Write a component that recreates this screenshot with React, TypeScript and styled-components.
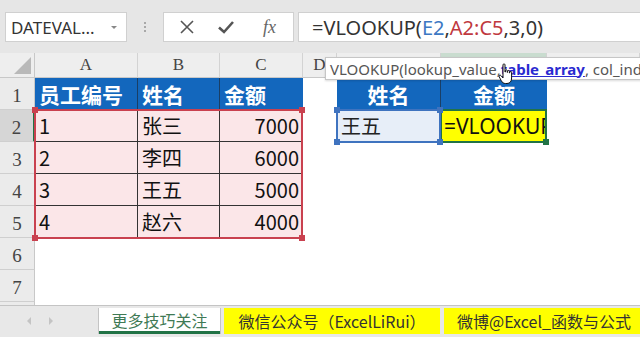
import React from "react";
import styled, { createGlobalStyle, css } from "styled-components";

const GlobalStyle = createGlobalStyle`
  html, body { margin: 0; padding: 0; background: #e6e6e6; }
  body { width: 640px; height: 337px; overflow: hidden; }
  * { box-sizing: border-box; }
`;

const UI = `"Noto Sans", "Noto Sans CJK SC", sans-serif`;
const CJK = `"Noto Sans CJK SC", "Noto Sans", sans-serif`;
const SERIF = `"Liberation Serif", serif`;

const Window = styled.div`
  width: 640px;
  height: 337px;
  display: flex;
  flex-direction: column;
  background: #e6e6e6;
  overflow: hidden;
`;

const FormulaBar = styled.div`
  height: 53px;
  flex: none;
  display: flex;
  align-items: flex-start;
  padding: 12px 0 0 5px;
  background: #e6e6e6;
`;

const Box = styled.div`
  height: 30px;
  background: #fff;
  border: 1px solid #d0d0d0;
  display: flex;
  align-items: center;
`;

const NameBox = styled(Box)`
  width: 122px;
  padding: 0 0 0 5px;
  font-family: ${UI};
  font-size: 17px;
  color: #333;
  justify-content: space-between;
`;

const Caret = styled.span`
  width: 0;
  height: 0;
  margin-right: 9px;
  border-left: 3px solid transparent;
  border-right: 3px solid transparent;
  border-top: 3px solid #888;
`;

const Grip = styled.div`
  width: 36px;
  height: 30px;
  display: flex;
  flex-direction: column;
  align-items: center;
  justify-content: center;
  gap: 2px;
  span { width: 2px; height: 2px; background: #a8a8a8; }
`;

const ButtonGroup = styled(Box)`
  width: 131px;
  justify-content: space-around;
  padding: 0 6px 0 4px;
  color: #555;
`;

const Fx = styled.span`
  font-family: ${SERIF};
  font-style: italic;
  font-size: 18px;
  color: #666;
  margin-left: 6px;
`;

const FormulaInput = styled(Box)`
  flex: 1;
  margin-left: 4px;
  border-right: none;
  padding-left: 13px;
  font-family: ${UI};
  font-size: 20px;
  color: #333;
  white-space: nowrap;
`;

const Ref = styled.span<{ $c: string }>`
  color: ${(p) => p.$c};
`;

const SheetArea = styled.div`
  flex: 1;
  position: relative;
  overflow: hidden;
  background: #fff;
`;

const Grid = styled.div`
  display: grid;
  grid-template-columns: 35px 103px 82px 83px 34px 104px 106px 1fr;
  grid-template-rows: 25px repeat(8, 32px);
`;

type Pos = { $r: number; $c: number };
const place = css<Pos>`
  grid-row: ${(p) => p.$r};
  grid-column: ${(p) => p.$c};
`;

const ColHead = styled.div<Pos & { $active?: boolean }>`
  ${place}
  background: ${(p) => (p.$active ? "#c9dccf" : "#eeeeee")};
  border-right: 1px solid #d3d3d3;
  border-bottom: 1px solid #c8c8c8;
  display: flex;
  align-items: flex-end;
  justify-content: center;
  padding-bottom: 2px;
  font-family: ${SERIF};
  font-size: 17px;
  color: #444;
`;

const Corner = styled.div`
  grid-row: 1;
  grid-column: 1;
  background: #eeeeee;
  border-right: 1px solid #c8c8c8;
  border-bottom: 1px solid #c8c8c8;
  position: relative;
  &::after {
    content: "";
    position: absolute;
    right: 3px;
    bottom: 3px;
    width: 0;
    height: 0;
    border-left: 17px solid transparent;
    border-bottom: 17px solid #b9b9b9;
  }
`;

const RowHead = styled.div<Pos & { $active?: boolean }>`
  ${place}
  background: ${(p) => (p.$active ? "#d6d6d6" : "#ebebeb")};
  border-bottom: 1px solid #cfcfcf;
  border-right: ${(p) => (p.$active ? "2px solid #217346" : "1px solid #c8c8c8")};
  display: flex;
  align-items: flex-end;
  justify-content: center;
  padding-bottom: 2px;
  font-family: ${SERIF};
  font-size: 19px;
  color: #444;
`;

type Kind = "blank" | "head" | "data" | "lookup" | "edit";

const kindStyles: Record<Kind, ReturnType<typeof css>> = {
  blank: css`background: #fff;`,
  head: css`
    background: #1367bd;
    color: #fff;
    font-weight: 700;
    font-size: 21px;
  `,
  data: css`background: #fbe6e8; color: #111;`,
  lookup: css`background: #e7eef8; color: #222;`,
  edit: css`
    background: #ffff00;
    color: #111;
    overflow: hidden;
    font-family: ${UI};
    font-size: 21px;
    padding-left: 3px;
  `,
};

const Cell = styled.div<Pos & { $kind: Kind; $align?: "left" | "right" | "center"; $br?: string; $bb?: string }>`
  ${place}
  display: flex;
  align-items: center;
  justify-content: ${(p) => (p.$align === "right" ? "flex-end" : p.$align === "center" ? "center" : "flex-start")};
  padding: 0 4px;
  font-family: ${CJK};
  font-size: 20px;
  line-height: 1;
  white-space: nowrap;
  border-right: ${(p) => (p.$br ? `1px solid ${p.$br}` : "none")};
  border-bottom: ${(p) => (p.$bb ? `1px solid ${p.$bb}` : "none")};
  ${(p) => kindStyles[p.$kind]}
`;

const Range = styled.div<{ $col: string; $row: string; $color: string }>`
  grid-column: ${(p) => p.$col};
  grid-row: ${(p) => p.$row};
  margin: -1px 0 -1px -1px;
  border: 2px solid ${(p) => p.$color};
  position: relative;
  pointer-events: none;
  z-index: 2;
`;

const Handle = styled.span<{ $pos: "tl" | "tr" | "bl" | "br"; $color: string }>`
  position: absolute;
  width: 6px;
  height: 6px;
  background: ${(p) => p.$color};
  ${(p) => (p.$pos[0] === "t" ? "top: -4px;" : "bottom: -4px;")}
  ${(p) => (p.$pos[1] === "l" ? "left: -4px;" : "right: -4px;")}
`;

const Tooltip = styled.div`
  position: absolute;
  left: 325px;
  top: 4px;
  width: 330px;
  height: 23px;
  background: #fff;
  border: 1px solid #c6c6c6;
  box-shadow: 0 1px 2px rgba(0, 0, 0, 0.15);
  display: flex;
  align-items: center;
  padding-left: 4px;
  font-family: ${UI};
  font-size: 15px;
  color: #555;
  white-space: nowrap;
  overflow: hidden;
  z-index: 5;
`;

const Arg = styled.span`
  color: #2a2ad0;
  font-weight: 700;
  text-decoration: underline;
`;

const Pointer = styled.svg`
  position: absolute;
  left: 498px;
  top: 10px;
  z-index: 6;
`;

const TabBar = styled.div`
  height: 32px;
  flex: none;
  background: #e8e8e8;
  border-top: 1px solid #c4c4c4;
  display: flex;
  align-items: flex-start;
  padding-top: 2px;
  overflow: hidden;
`;

const Nav = styled.div`
  width: 99px;
  flex: none;
  height: 26px;
  display: flex;
  align-items: center;
  gap: 18px;
  padding-left: 27px;
`;

const Arrow = styled.span<{ $dir: "l" | "r" }>`
  width: 0;
  height: 0;
  border-top: 4px solid transparent;
  border-bottom: 4px solid transparent;
  ${(p) => (p.$dir === "l" ? "border-right: 4px solid #c4c4c4;" : "border-left: 4px solid #c4c4c4;")}
`;

const Tab = styled.div<{ $active?: boolean; $w: number }>`
  width: ${(p) => p.$w}px;
  flex: none;
  height: 26px;
  display: flex;
  align-items: center;
  justify-content: center;
  font-family: ${CJK};
  font-size: 16px;
  line-height: 1;
  white-space: nowrap;
  margin-right: 4px;
  ${(p) =>
    p.$active
      ? css`
          background: #fff;
          color: #3f7a55;
          border-bottom: 3px solid #217346;
          box-shadow: 1px 0 0 #c4c4c4, -1px 0 0 #c4c4c4;
        `
      : css`
          background: #ffff00;
          color: #333;
        `}
`;

const cols = ["A", "B", "C", "D", "E", "F", "G"];

type CellDef = { t?: string; k: Kind; a?: "left" | "right" | "center"; br?: string; bb?: string };

const DARK = "#333";
const HEADLINE = "#1a3f66";

const rows: CellDef[][] = [
  [
    { t: "员工编号", k: "head", br: HEADLINE },
    { t: "姓名", k: "head", br: HEADLINE },
    { t: "金额", k: "head" },
    { k: "blank" },
    { t: "姓名", k: "head", a: "center", br: HEADLINE },
    { t: "金额", k: "head", a: "center" },
    { k: "blank" },
  ],
  ...[
    ["1", "张三", "7000"],
    ["2", "李四", "6000"],
    ["3", "王五", "5000"],
    ["4", "赵六", "4000"],
  ].map((r, i): CellDef[] => {
    const bb = i < 3 ? DARK : undefined;
    const base: CellDef[] = [
      { t: r[0], k: "data", br: DARK, bb },
      { t: r[1], k: "data", br: DARK, bb },
      { t: r[2], k: "data", a: "right", bb },
      { k: "blank" },
    ];
    if (i === 0) {
      base.push({ t: "王五", k: "lookup" }, { t: "=VLOOKUP", k: "edit" }, { k: "blank" });
    } else {
      base.push({ k: "blank" }, { k: "blank" }, { k: "blank" });
    }
    return base;
  }),
  ...[0, 1, 2].map((): CellDef[] => cols.map(() => ({ k: "blank" as Kind }))),
];

const XIcon = () => (
  <svg width="16" height="16" viewBox="0 0 16 16">
    <path d="M2 2 L14 14 M14 2 L2 14" stroke="#555" strokeWidth="1.6" fill="none" />
  </svg>
);

const CheckIcon = () => (
  <svg width="18" height="16" viewBox="0 0 18 16">
    <path d="M2 8.5 L7 13 L16 3" stroke="#555" strokeWidth="2.6" fill="none" />
  </svg>
);

export default function App() {
  return (
    <>
      <GlobalStyle />
      <Window>
        <FormulaBar>
          <NameBox>
            DATEVAL...
            <Caret />
          </NameBox>
          <Grip>
            <span />
            <span />
            <span />
          </Grip>
          <ButtonGroup>
            <XIcon />
            <CheckIcon />
            <Fx>fx</Fx>
          </ButtonGroup>
          <FormulaInput>
            =VLOOKUP(<Ref $c="#3c78c3">E2</Ref>,<Ref $c="#c0393f">A2:C5</Ref>,3,0)
          </FormulaInput>
        </FormulaBar>
        <SheetArea>
          <Grid>
            <Corner />
            {cols.map((c, ci) => (
              <ColHead key={c} $r={1} $c={ci + 2} $active={c === "F"}>
                {c}
              </ColHead>
            ))}
            {rows.map((r, ri) => (
              <React.Fragment key={ri}>
                <RowHead $r={ri + 2} $c={1} $active={ri === 1}>
                  {ri + 1}
                </RowHead>
                {r.map((cell, ci) => (
                  <Cell
                    key={ci}
                    $r={ri + 2}
                    $c={ci + 2}
                    $kind={cell.k}
                    $align={cell.a}
                    $br={cell.br}
                    $bb={cell.bb}
                  >
                    {cell.t}
                  </Cell>
                ))}
              </React.Fragment>
            ))}
            <Range $col="2 / 5" $row="3 / 7" $color="#c9414f">
              <Handle $pos="tl" $color="#c9414f" />
              <Handle $pos="tr" $color="#c9414f" />
              <Handle $pos="bl" $color="#c9414f" />
              <Handle $pos="br" $color="#c9414f" />
            </Range>
            <Range $col="7 / 8" $row="3 / 4" $color="#217346">
              <Handle $pos="br" $color="#217346" />
            </Range>
            <Range $col="6 / 7" $row="3 / 4" $color="#3f73bf">
              <Handle $pos="tl" $color="#3f73bf" />
              <Handle $pos="tr" $color="#3f73bf" />
              <Handle $pos="bl" $color="#3f73bf" />
              <Handle $pos="br" $color="#3f73bf" />
            </Range>
          </Grid>
          <Tooltip>
            VLOOKUP(lookup_value, <Arg>table_array</Arg>, col_index_num, [range_lookup])
          </Tooltip>
          <Pointer width="17" height="22" viewBox="0 0 17 22">
            <path
              d="M5 1.8 C5 0.6 7 0.6 7 1.8 L7 9 L7.4 9 L7.4 7.6 C7.4 6.5 9.2 6.5 9.2 7.6 L9.2 9.4 L9.6 9.4 L9.6 8.3 C9.6 7.2 11.4 7.2 11.4 8.3 L11.4 10 L11.8 10 L11.8 9.3 C11.8 8.2 13.6 8.2 13.6 9.3 L13.6 15 C13.6 18.3 12 20.5 9 20.5 L7.5 20.5 C5.5 20.5 4.3 19.5 3.3 17.8 L1.2 13.8 C0.6 12.6 2.2 11.6 3 12.6 L5 15 Z"
              fill="#fff"
              stroke="#111"
              strokeWidth="1"
            />
          </Pointer>
        </SheetArea>
        <TabBar>
          <Nav>
            <Arrow $dir="l" />
            <Arrow $dir="r" />
          </Nav>
          <Tab $active $w={121}>更多技巧关注</Tab>
          <Tab $w={216}>微信公众号（ExcelLiRui）</Tab>
          <Tab $w={200}>微博@Excel_函数与公式</Tab>
        </TabBar>
      </Window>
    </>
  );
}
